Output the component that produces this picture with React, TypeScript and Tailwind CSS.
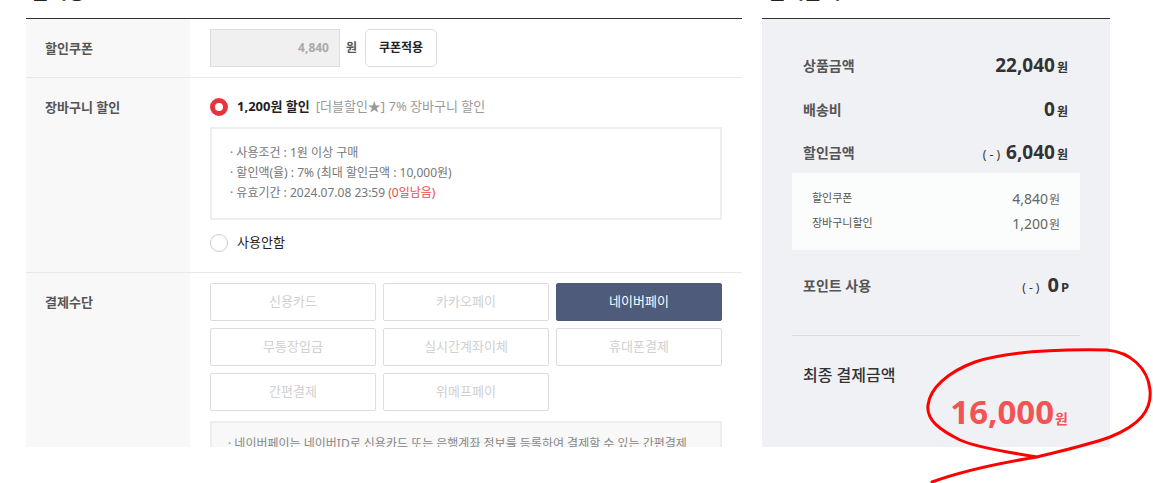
import React from "react";

const payMethods = [
  "신용카드",
  "카카오페이",
  "네이버페이",
  "무통장입금",
  "실시간계좌이체",
  "휴대폰결제",
  "간편결제",
  "위메프페이",
];

function SummaryRow({ label, children, h }: { label: string; children: React.ReactNode; h: string }) {
  return (
    <div className={`flex items-center justify-between ${h}`}>
      <span className="text-[14px] font-semibold text-[#555]">{label}</span>
      <span className="flex items-baseline text-[#333]">{children}</span>
    </div>
  );
}

export default function App() {
  return (
    <div className="relative w-[1153px] h-[483px] bg-white overflow-hidden font-['Noto_Sans','Noto_Sans_CJK_KR',sans-serif]">
      <div className="flex items-start h-[447px] overflow-hidden pl-[26px]">
        {/* Left: payment info table */}
        <div className="w-[716px] shrink-0">
          <div className="h-[18px] pl-[4px] flex items-start">
            <div className="-mt-[21px] text-[20px] leading-[24px] font-bold text-[#222] font-['Noto_Sans_CJK_KR',sans-serif]">
              결제정보
            </div>
          </div>
          <div className="border-t border-[#333]">
            {/* Row 1 */}
            <div className="grid grid-cols-[164px_1fr] border-b border-[#e8e8e8]">
              <div className="bg-[#f8f8f8] pl-[19px] pt-[19px] text-[13px] leading-[20px] font-bold text-[#555]">
                할인쿠폰
              </div>
              <div className="pl-[20px] py-[10px] flex items-center">
                <div className="w-[130px] h-[38px] bg-[#f0f0f0] border border-[#ddd] flex items-center justify-end pr-[10px] text-[12px] font-bold text-[#aaa]">
                  4,840
                </div>
                <span className="ml-[6px] text-[12px] font-bold text-[#555]">원</span>
                <button className="ml-[8px] w-[72px] h-[38px] rounded-[5px] border border-[#ddd] bg-white text-[12px] font-bold text-[#222]">
                  쿠폰적용
                </button>
              </div>
            </div>
            {/* Row 2 */}
            <div className="grid grid-cols-[164px_1fr] border-b border-[#e8e8e8]">
              <div className="bg-[#f8f8f8] pl-[19px] pt-[19px] text-[13px] leading-[20px] font-bold text-[#555]">
                장바구니 할인
              </div>
              <div className="pl-[20px] pr-[20px] pt-[20px] pb-[20px]">
                <div className="flex items-center h-[18px]">
                  <span className="w-[18px] h-[18px] rounded-full border-[5px] border-[#e8323c] bg-white box-border" />
                  <span className="ml-[9px] text-[13px] font-bold text-[#222]">1,200원 할인</span>
                  <span className="ml-[6px] text-[13px] text-[#999]">[더블할인★] 7% 장바구니 할인</span>
                </div>
                <div className="mt-[11px] w-[512px] border-2 border-[#eee] pl-[18px] pt-[14px] pb-[15px] text-[12px] leading-[20px] text-[#777]">
                  <div>· 사용조건 : 1원 이상 구매</div>
                  <div>· 할인액(율) : 7% (최대 할인금액 : 10,000원)</div>
                  <div>
                    · 유효기간 : 2024.07.08 23:59 <span className="text-[#f04848]">(0일남음)</span>
                  </div>
                </div>
                <div className="mt-[14px] flex items-center h-[18px]">
                  <span className="w-[18px] h-[18px] rounded-full border border-[#ccc] bg-white" />
                  <span className="ml-[9px] text-[13px] text-[#222]">사용안함</span>
                </div>
              </div>
            </div>
            {/* Row 3 */}
            <div className="grid grid-cols-[164px_1fr] h-[220px]">
              <div className="bg-[#f8f8f8] pl-[19px] pt-[19px] text-[13px] leading-[20px] font-bold text-[#555]">
                결제수단
              </div>
              <div className="pl-[20px] pt-[10px]">
                <div className="grid grid-cols-[166px_166px_166px] gap-x-[7px] gap-y-[7px]">
                  {payMethods.map((m) => {
                    const sel = m === "네이버페이";
                    return (
                      <div
                        key={m}
                        className={
                          sel
                            ? "h-[38px] rounded-[2px] bg-[#4e5b7a] border border-[#4e5b7a] flex items-center justify-center text-[13px] text-white"
                            : "h-[38px] rounded-[2px] bg-white border border-[#ddd] flex items-center justify-center text-[13px] text-[#d0d0d0]"
                        }
                      >
                        {m}
                      </div>
                    );
                  })}
                </div>
                <div className="mt-[10px] w-[512px] h-[60px] border-2 border-[#eee] bg-[#f8f8f8] pl-[16px] pt-[11px] text-[12px] leading-[20px] text-[#888]">
                  · 네이버페이는 네이버ID로 신용카드 또는 은행계좌 정보를 등록하여 결제할 수 있는 간편결제
                </div>
              </div>
            </div>
          </div>
        </div>

        {/* Right: summary */}
        <div className="w-[348px] ml-[20px] shrink-0 h-[447px] flex flex-col">
          <div className="h-[18px] shrink-0 pl-[5px] flex items-start">
            <div className="-mt-[21px] text-[20px] leading-[24px] font-bold text-[#222] font-['Noto_Sans_CJK_KR',sans-serif]">
              결제금액
            </div>
          </div>
          <div className="border-t border-[#333] bg-[#f0f1f5] flex-1 pt-[24px]">
            <div className="pl-[41px] pr-[42px]">
              <SummaryRow label="상품금액" h="h-[44px]">
                <span className="text-[19px] font-bold">22,040</span>
                <span className="ml-[2px] text-[12px] font-bold">원</span>
              </SummaryRow>
              <SummaryRow label="배송비" h="h-[44px]">
                <span className="text-[19px] font-bold">0</span>
                <span className="ml-[2px] text-[12px] font-bold">원</span>
              </SummaryRow>
              <SummaryRow label="할인금액" h="h-[42px]">
                <span className="text-[12px] text-[#333] mr-[6px]">( - )</span>
                <span className="text-[19px] font-bold">6,040</span>
                <span className="ml-[2px] text-[12px] font-bold">원</span>
              </SummaryRow>
            </div>
            <div className="mx-[30px] h-[77px] bg-[#fbfcfc] px-[20px] pt-[13px] text-[#555]">
              <div className="flex items-center justify-between h-[25px]">
                <span className="text-[11px]">할인쿠폰</span>
                <span className="flex items-baseline text-[#666]">
                  <span className="text-[14px]">4,840</span>
                  <span className="ml-[1px] text-[12px]">원</span>
                </span>
              </div>
              <div className="flex items-center justify-between h-[25px]">
                <span className="text-[11px]">장바구니할인</span>
                <span className="flex items-baseline text-[#666]">
                  <span className="text-[14px]">1,200</span>
                  <span className="ml-[1px] text-[12px]">원</span>
                </span>
              </div>
            </div>
            <div className="pl-[41px] pr-[41px] mt-[13px]">
              <SummaryRow label="포인트 사용" h="h-[44px]">
                <span className="text-[12px] text-[#333] mr-[8px]">( - )</span>
                <span className="text-[20px] font-bold">0</span>
                <span className="ml-[2px] text-[13px] font-bold">P</span>
              </SummaryRow>
            </div>
            <div className="mx-[30px] mt-[28px] border-t border-[#dcdde2]" />
            <div className="pl-[41px] pr-[42px] mt-[27px]">
              <div className="h-[24px] flex items-center text-[16px] font-medium text-[#333]">최종 결제금액</div>
              <div className="mt-[5px] h-[40px] flex items-baseline justify-end text-[#f05454]">
                <span className="text-[33px] leading-[40px] font-bold">16,000</span>
                <span className="ml-[1px] text-[14px] font-bold">원</span>
              </div>
            </div>
          </div>
        </div>
      </div>

      {/* Hand-drawn annotation */}
      <svg className="absolute inset-0 pointer-events-none" width="1153" height="483" viewBox="0 0 1153 483">
        <path
          d="M932 482 C965 470 1000 463 1037 457 C1005 452 975 447 960 440 C940 430 926 420 928 405 C930 388 948 372 975 362 C1005 352 1050 349 1107 350 C1130 352 1148 368 1150 390 C1152 410 1140 425 1110 437 C1085 446 1060 451 1037 457"
          fill="none"
          stroke="#ff0000"
          strokeWidth="3"
          strokeLinecap="round"
          strokeLinejoin="round"
        />
      </svg>
    </div>
  );
}
